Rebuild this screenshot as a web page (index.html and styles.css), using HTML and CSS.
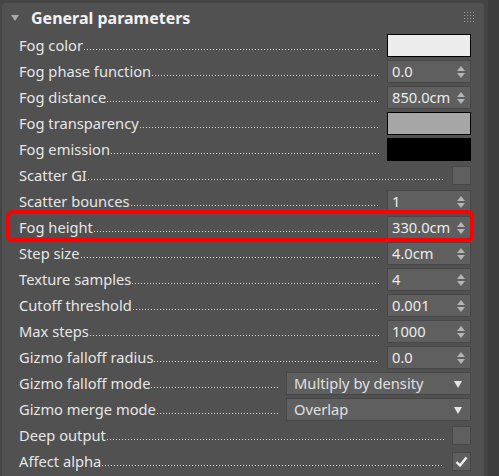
FILE: index.html
```html
<!DOCTYPE html>
<html>
<head>
<meta charset="utf-8">
<link rel="stylesheet" href="styles.css">
</head>
<body>
<div class="frame">
  <div class="panel">
    <div class="header">
      <span class="tri"></span>
      <span class="title">General parameters</span>
      <svg class="grip" width="10" height="10" viewBox="0 0 10 10"><g fill="#9a9a9a"><rect x="0" y="0" width="1" height="1"/><rect x="3" y="0" width="1" height="1"/><rect x="6" y="0" width="1" height="1"/><rect x="9" y="0" width="1" height="1"/><rect x="0" y="3" width="1" height="1"/><rect x="3" y="3" width="1" height="1"/><rect x="6" y="3" width="1" height="1"/><rect x="9" y="3" width="1" height="1"/><rect x="0" y="6" width="1" height="1"/><rect x="3" y="6" width="1" height="1"/><rect x="6" y="6" width="1" height="1"/><rect x="9" y="6" width="1" height="1"/><rect x="0" y="9" width="1" height="1"/><rect x="3" y="9" width="1" height="1"/><rect x="6" y="9" width="1" height="1"/><rect x="9" y="9" width="1" height="1"/></g></svg>
    </div>
    <div class="rows">
      <div class="row"><span class="label">Fog color</span><span class="dots"></span><span class="swatch white"></span></div>
      <div class="row"><span class="label">Fog phase function</span><span class="dots"></span><span class="num">0.0<span class="spin"></span></span></div>
      <div class="row"><span class="label">Fog distance</span><span class="dots"></span><span class="num">850.0cm<span class="spin"></span></span></div>
      <div class="row"><span class="label">Fog transparency</span><span class="dots"></span><span class="swatch grey"></span></div>
      <div class="row"><span class="label">Fog emission</span><span class="dots"></span><span class="swatch black"></span></div>
      <div class="row"><span class="label">Scatter GI</span><span class="dots"></span><span class="check"></span></div>
      <div class="row"><span class="label">Scatter bounces</span><span class="dots"></span><span class="num">1<span class="spin"></span></span></div>
      <div class="row highlighted"><span class="label">Fog height</span><span class="dots"></span><span class="num">330.0cm<span class="spin"></span></span><span class="hl"></span></div>
      <div class="row"><span class="label">Step size</span><span class="dots"></span><span class="num">4.0cm<span class="spin"></span></span></div>
      <div class="row"><span class="label">Texture samples</span><span class="dots"></span><span class="num">4<span class="spin"></span></span></div>
      <div class="row"><span class="label">Cutoff threshold</span><span class="dots"></span><span class="num">0.001<span class="spin"></span></span></div>
      <div class="row"><span class="label">Max steps</span><span class="dots"></span><span class="num">1000<span class="spin"></span></span></div>
      <div class="row"><span class="label">Gizmo falloff radius</span><span class="dots"></span><span class="num">0.0<span class="spin"></span></span></div>
      <div class="row"><span class="label">Gizmo falloff mode</span><span class="dots"></span><span class="select">Multiply by density<span class="caret"></span></span></div>
      <div class="row"><span class="label">Gizmo merge mode</span><span class="dots"></span><span class="select">Overlap<span class="caret"></span></span></div>
      <div class="row"><span class="label">Deep output</span><span class="dots"></span><span class="check"></span></div>
      <div class="row"><span class="label">Affect alpha</span><span class="dots"></span><span class="check on"><svg width="13" height="11" viewBox="0 0 13 11"><path d="M1.5 6 L5 9.5 L11.5 1.5" fill="none" stroke="#f2f2f2" stroke-width="2.4"/></svg></span></div>
    </div>
  </div>
</div>
</body>
</html>
```

FILE: styles.css
```css
html, body {
  margin: 0;
  padding: 0;
}
body {
  background: #3c3c3c;
  font-family: "Noto Sans", "Open Sans", sans-serif;
  font-size: 14.7px;
  color: #e6e6e6;
  width: 499px;
  height: 476px;
  overflow: hidden;
}
.frame {
  width: 488px;
  height: 476px;
  background: #454545;
  padding-top: 3px;
  box-sizing: border-box;
}
.panel {
  margin-left: 2px;
  width: 482px;
  background: #515151;
  border-radius: 4px 4px 0 0;
  height: 480px;
}
.header {
  height: 29px;
  display: flex;
  align-items: center;
  position: relative;
}
.tri {
  width: 0;
  height: 0;
  margin-left: 9px;
  border-left: 4px solid transparent;
  border-right: 4px solid transparent;
  border-top: 6px solid #a8a8a8;
}
.title {
  margin-left: 12px;
  font-weight: bold;
  font-size: 16px;
  color: #f2f2f2;
}
.grip {
  position: absolute;
  right: 10px;
  top: 9px;
}
.rows {
  display: flex;
  flex-direction: column;
}
.row {
  height: 26px;
  display: flex;
  align-items: center;
  padding: 0 13px 0 17px;
  position: relative;
}
.label {
  white-space: nowrap;
  line-height: 26px;
}
.dots {
  flex: 1;
  align-self: flex-end;
  height: 1px;
  margin: 0 8px 8px 1px;
  background-image: repeating-linear-gradient(to right, #dcdcdc 0 1px, transparent 1px 3px);
}
.num, .swatch {
  width: 84px;
  height: 23px;
  box-sizing: border-box;
}
.num {
  position: relative;
  background: #5f5f5f;
  border: 1px solid #474747;
  padding-left: 4px;
  line-height: 21px;
  color: #ececec;
}
.spin {
  position: absolute;
  right: 5px;
  top: 5px;
  width: 8px;
  height: 12px;
}
.spin::before, .spin::after {
  content: "";
  position: absolute;
  left: 0;
  border-left: 4px solid transparent;
  border-right: 4px solid transparent;
}
.spin::before {
  top: 0;
  border-bottom: 5px solid #b4b4b4;
}
.spin::after {
  bottom: 0;
  border-top: 5px solid #b4b4b4;
}
.swatch {
  border: 1px solid #000;
}
.swatch.white { background: #ececec; }
.swatch.grey { background: #a6a6a6; }
.swatch.black { background: #000; }
.check {
  width: 19px;
  height: 19px;
  box-sizing: border-box;
  background: #5f5f5f;
  border: 1px solid #474747;
  display: flex;
  align-items: center;
  justify-content: center;
}
.select {
  width: 185px;
  height: 23px;
  box-sizing: border-box;
  background: #5f5f5f;
  border: 1px solid #474747;
  padding-left: 7px;
  line-height: 21px;
  color: #e0e0e0;
  position: relative;
}
.caret {
  position: absolute;
  right: 8px;
  top: 8px;
  border-left: 4px solid transparent;
  border-right: 4px solid transparent;
  border-top: 7px solid #e6e6e6;
}
.hl {
  position: absolute;
  left: 4px;
  right: 10px;
  top: -4px;
  bottom: -2px;
  border: 4px solid #ff0000;
  border-radius: 6px;
  pointer-events: none;
}
```
